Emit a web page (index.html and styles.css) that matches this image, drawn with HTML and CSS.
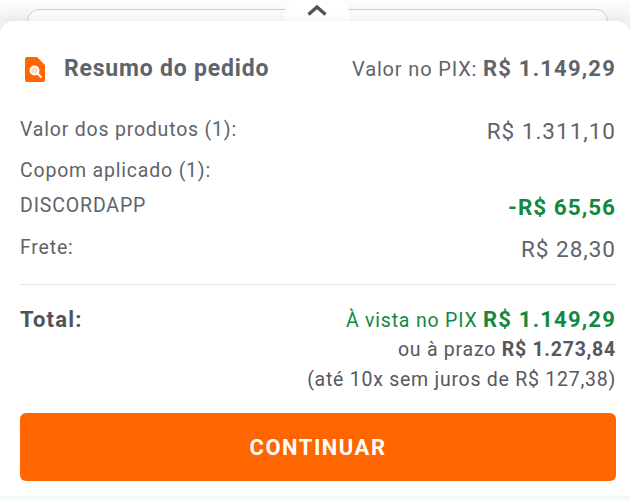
FILE: index.html
```html
<!DOCTYPE html>
<html lang="pt-BR">
<head>
  <meta charset="UTF-8" />
  <title>Resumo do pedido</title>
  <link rel="stylesheet" href="styles.css">
</head>
<body>

<div class="top">
  <div class="top-field"></div>
  <button class="toggle" aria-label="Recolher">
    <svg width="22" height="12" viewBox="0 0 22 12"><path d="M2.500 10.500 11 3l8.500 7.500" fill="none" stroke="#4f535c" stroke-width="3.400"/></svg>
  </button>
</div>

<div class="card">
  <div class="head">
    <div class="title">
      <svg class="doc" width="20" height="25" viewBox="0 0 20 25">
        <path d="M2 0H12L20 8V23a2 2 0 0 1-2 2H2a2 2 0 0 1-2-2V2a2 2 0 0 1 2-2Z" fill="#ff6500"/>
        <circle cx="9.500" cy="13.500" r="4" fill="#ffd9bf" stroke="#fff" stroke-width="2"/>
        <path d="M12.500 16.500 16 20" stroke="#fff" stroke-width="2.200" stroke-linecap="round"/>
      </svg>
      <h2>Resumo do pedido</h2>
    </div>
    <div class="pix-value">Valor no PIX: <b>R$ 1.149,29</b></div>
  </div>

  <div class="row row-products">
    <span>Valor dos produtos (1):</span>
    <span class="val">R$ 1.311,10</span>
  </div>
  <div class="row row-coupon-label">
    <span>Copom aplicado (1):</span>
  </div>
  <div class="row row-coupon">
    <span class="code">DISCORDAPP</span>
    <span class="val discount">-R$ 65,56</span>
  </div>
  <div class="row row-freight">
    <span>Frete:</span>
    <span class="val">R$ 28,30</span>
  </div>

  <hr class="divider" />

  <div class="total">
    <div class="total-label">Total:</div>
    <div class="total-values">
      <div class="pix-line">À vista no PIX <b>R$ 1.149,29</b></div>
      <div class="term-line">ou à prazo <b>R$ 1.273,84</b></div>
      <div class="term-line">(até 10x sem juros de R$ 127,38)</div>
    </div>
  </div>

  <button class="continue">CONTINUAR</button>
</div>

<div class="bottom"></div>

</body>
</html>
```

FILE: styles.css
```css
* {
  box-sizing: border-box;
}

html, body {
  margin: 0;
  height: 500px;
  overflow: hidden;
}

body {
  font-family: Roboto, Arial, sans-serif;
  background: #f5f5f5;
  color: #5f636b;
  display: flex;
  flex-direction: column;
}

.top {
  height: 21px;
  padding: 9px 22px 0 27px;
  background: linear-gradient(#fdfdfd, #f1f1f1);
  display: flex;
  justify-content: center;
  position: relative;
  z-index: 0;
}

.top-field {
  flex: 1;
  height: 30px;
  border: 1px solid #cfcfcf;
  border-radius: 12px 12px 0 0;
  background: #fafafa;
}

.toggle {
  position: absolute;
  left: 284px;
  top: -14px;
  width: 66px;
  height: 50px;
  border: 0;
  padding: 0;
  border-radius: 33px 33px 0 0;
  background: #fff;
}

.card {
  flex: 1;
  background: #fff;
  border-radius: 14px 14px 0 0;
  padding: 0 14px 0 20px;
  position: relative;
  box-shadow: 0 -2px 8px rgba(0,0,0,0.05);
}

.head {
  height: 62px;
  margin-top: 35px;
  display: flex;
  justify-content: space-between;
  align-items: flex-start;
}

.title {
  display: flex;
  align-items: center;
  gap: 19px;
  margin-left: 5px;
}

.doc {
  flex: none;
}

h2 {
  margin: 0;
  font-size: 23px;
  font-weight: 700;
  letter-spacing: 0.8px;
  line-height: 26px;
}

.pix-value {
  font-size: 20px;
  line-height: 26px;
  letter-spacing: 0.85px;
}

.pix-value b {
  font-size: 22px;
  letter-spacing: 1.2px;
}

.row {
  display: flex;
  justify-content: space-between;
  font-size: 19.500px;
  letter-spacing: 0.8px;
  align-items: flex-start;
  line-height: 24px;
}

.val {
  font-size: 22.500px;
  line-height: 28px;
  margin-top: -1px;
  letter-spacing: 1px;
}

.row-products { height: 41px; }
.row-coupon-label { height: 35px; }
.row-coupon { height: 42px; }
.row-freight { height: 48px; }

.code {
  font-size: 19.500px;
  letter-spacing: 0.85px;
}

.discount {
  color: #12893f;
  font-weight: 700;
}

.divider {
  margin: 0;
  border: 0;
  border-top: 1px solid #e3e3e3;
}

.total {
  margin-top: 21px;
  display: flex;
  justify-content: space-between;
}

.total-label {
  font-size: 22px;
  font-weight: 700;
  line-height: 28px;
  letter-spacing: 1.200px;
  color: #4f535c;
}

.total-values {
  text-align: right;
}

.pix-line {
  font-size: 19.500px;
  line-height: 28px;
  color: #12893f;
  letter-spacing: 0.8px;
}

.pix-line b {
  font-size: 22px;
  letter-spacing: 1.200px;
}

.term-line {
  font-size: 19.500px;
  line-height: 30px;
  letter-spacing: 0.75px;
  color: #55585f;
}

.continue {
  display: block;
  width: 596px;
  height: 68px;
  margin-top: 18px;
  border: 0;
  border-radius: 6px;
  background: #ff6500;
  color: #fff;
  font-family: Roboto, Arial, sans-serif;
  font-size: 22px;
  font-weight: 700;
  letter-spacing: 1.500px;
}

.bottom {
  height: 4px;
  background: #f4fbfb;
}
```
